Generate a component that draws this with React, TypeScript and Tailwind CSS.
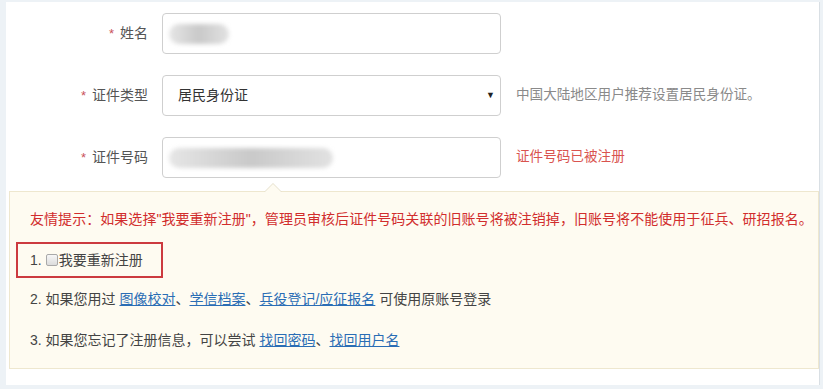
import React from 'react';

const font = { fontFamily: '"Liberation Sans", "Noto Sans CJK SC", sans-serif' };

function Label({ text }: { text: string }) {
  return (
    <div className="flex w-[142px] shrink-0 items-center justify-end text-[14px] text-[#555]">
      <span className="mr-[6px] text-[13px] text-[#c9525c]">*</span>
      {text}
    </div>
  );
}

function Blob({ w }: { w: number }) {
  return (
    <div className="flex items-center" style={{ width: w }}>
      <div className="h-[20px] w-full rounded-full bg-gradient-to-r from-[#e6e6e6] via-[#c9c9c9] to-[#e2e2e2] blur-[2px]" />
    </div>
  );
}

export default function App() {
  return (
    <div className="min-h-screen bg-[#edf2f6] pl-[6px] pt-[2px]" style={font}>
      <div className="h-[383px] w-[814px] border-r border-[#d9dfe4] bg-white pt-[11px]">
        <div className="flex flex-col gap-[21px]">
          <div className="flex h-[41px] items-center">
            <Label text="姓名" />
            <div className="ml-[14px] flex h-[41px] w-[339px] items-center rounded-[4px] border border-[#cfcfcf] pl-[6px]">
              <Blob w={60} />
            </div>
          </div>
          <div className="flex h-[41px] items-center">
            <Label text="证件类型" />
            <div className="ml-[14px] flex h-[41px] w-[339px] items-center justify-between rounded-[4px] border border-[#cfcfcf] pl-[15px] pr-[5px] text-[14px] text-[#333]">
              <span>居民身份证</span>
              <span className="text-[9px] text-[#222]">▼</span>
            </div>
            <span className="ml-[15px] text-[13.6px] text-[#8a8a8a]">中国大陆地区用户推荐设置居民身份证。</span>
          </div>
          <div className="flex h-[41px] items-center">
            <Label text="证件号码" />
            <div className="ml-[14px] flex h-[41px] w-[339px] items-center rounded-[4px] border border-[#cfcfcf] pl-[6px]">
              <Blob w={164} />
            </div>
            <span className="ml-[15px] text-[13.6px] text-[#d9534f]">证件号码已被注册</span>
          </div>
        </div>

        <div className="relative ml-[3px] mt-[13px] h-[178px] border border-[#eee7cf] bg-[#fefbf1]">
          <div className="absolute -top-[9px] left-[254px] h-0 w-0 border-x-[9px] border-b-[9px] border-x-transparent border-b-[#e6e0cc]" />
          <div className="absolute -top-[8px] left-[255px] h-0 w-0 border-x-[8px] border-b-[8px] border-x-transparent border-b-[#fefbf1]" />
          <div className="flex flex-col pl-[20px] pt-[17px] text-[14px] leading-[20px] text-[#444]">
            <p className="tracking-[0.05px] text-[#d12d2d]">
              友情提示：如果选择"我要重新注册"，管理员审核后证件号码关联的旧账号将被注销掉，旧账号将不能使用于征兵、研招报名。
            </p>
            <div className="-ml-[14px] mt-[13px] flex h-[36px] w-[147px] items-center border-2 border-[#cc3a3f] pl-[12px]">
              <span>1.</span>
              <span className="ml-[4px] mr-[1px] inline-block h-[12px] w-[12px] rounded-[2px] border border-[#a9a9a9] bg-gradient-to-b from-[#f7f7f7] to-[#dcdcdc]" />
              <span>我要重新注册</span>
            </div>
            <p className="mt-[11px]">
              2. 如果您用过{' '}
              <a className="text-[#2a6db5] underline">图像校对</a>、
              <a className="text-[#2a6db5] underline">学信档案</a>、
              <a className="text-[#2a6db5] underline">兵役登记/应征报名</a> 可使用原账号登录
            </p>
            <p className="mt-[21px]">
              3. 如果您忘记了注册信息，可以尝试{' '}
              <a className="text-[#2a6db5] underline">找回密码</a>、
              <a className="text-[#2a6db5] underline">找回用户名</a>
            </p>
          </div>
        </div>
      </div>
    </div>
  );
}
